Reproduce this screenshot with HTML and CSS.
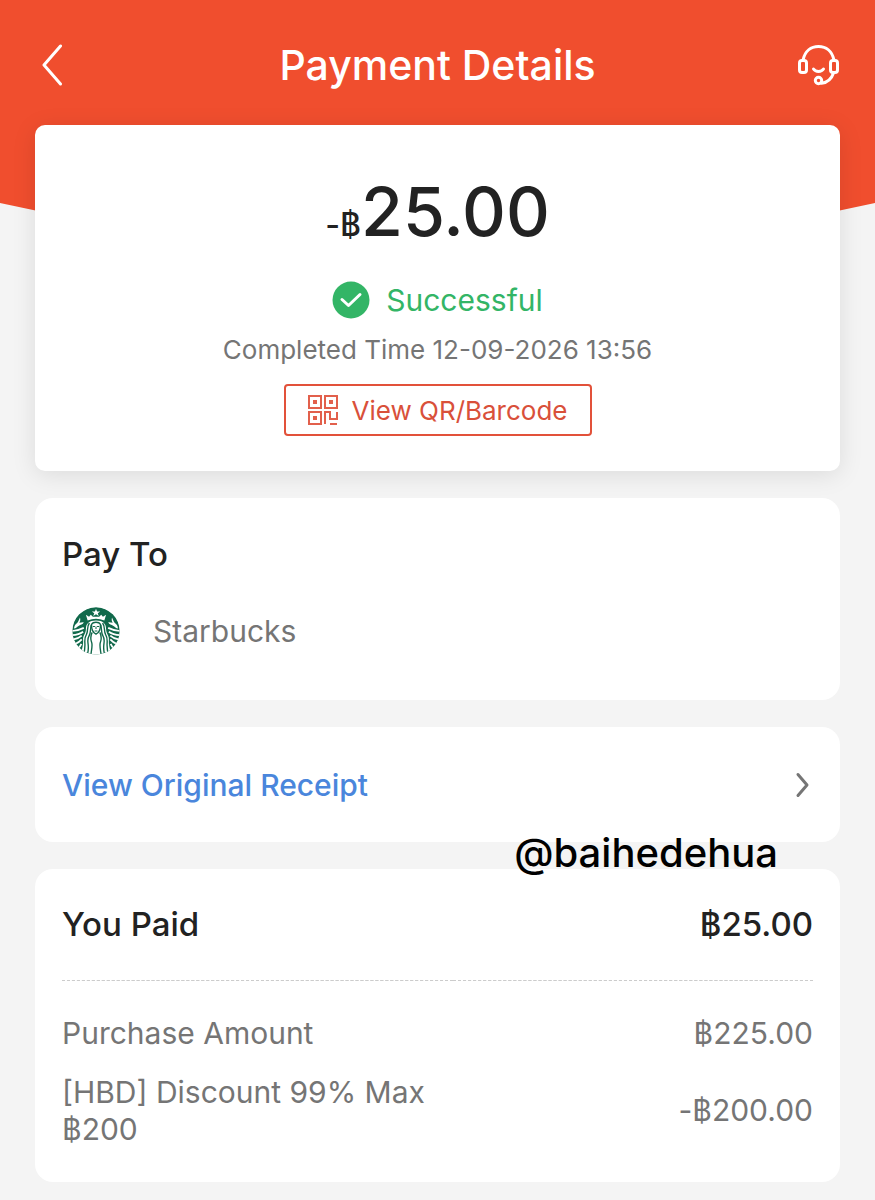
FILE: index.html
```html
<!DOCTYPE html>
<html lang="en">
<head>
    <meta charset="UTF-8">
    <meta name="viewport" content="width=device-width, initial-scale=1">
    <title>Payment Details</title>
    <link rel="stylesheet" href="styles.css">
</head>
<body>
    <header class="header">
        <button type="button" class="icon-button" aria-label="Back">
            <svg width="42" height="42" viewBox="0 0 42 42">
                <path d="M24.500 2 L8 21 L24.500 40" />
            </svg>
        </button>
        <h1>Payment Details</h1>
        <button type="button" class="icon-button" aria-label="Help">
            <svg width="42" height="42" viewBox="0 0 42 42">
                <path d="M6 16 C8 7 14 2.500 21.500 2.500 C29 2.500 35 7 37 16" />
                <rect x="2.500" y="16.500" width="7" height="12" rx="2.500" />
                <rect x="33.500" y="16.500" width="7" height="12" rx="2.500" />
                <path d="M16.500 25 C18.500 28.200 24.500 28.200 26.500 25" />
                <circle cx="21.500" cy="36.500" r="3.200" />
                <path d="M36.500 29 C34.500 35 31 38.500 24.500 39.300" />
            </svg>
        </button>
    </header>

    <main>
        <!-- summary -->
        <section class="card summary">
            <p class="amount"><span>-฿</span>25.00</p>
            <p class="status">
                <svg width="38" height="38" viewBox="0 0 38 38">
                    <circle cx="19" cy="19" r="18.500" />
                    <path d="M10 18.500 L16.500 24.500 L28 13.500" />
                </svg>
                Successful
            </p>
            <p class="time">Completed Time 12-09-2026 13:56</p>
            <button type="button" class="qr-button">
                <svg width="30" height="30" viewBox="0 0 30 30">
                    <path d="M1 1h12v12H1z M17 1h12v12H17z M1 17h12v12H1z" />
                    <path d="M17 29V17h5v7h7v-7 M22 29h7" />
                    <path class="dot" d="M5 5h4v4H5z M21 5h4v4h-4z M5 21h4v4H5z" />
                </svg>
                View QR/Barcode
            </button>
        </section>

        <!-- merchant -->
        <section class="card pay-to">
            <h2>Pay To</h2>
            <div class="merchant">
                <svg width="48" height="48" viewBox="0 0 138 138">
                    <defs>
                        <clipPath id="disc"><circle cx="69" cy="69" r="68" /></clipPath>
                    </defs>
                    <g clip-path="url(#disc)">
                        <circle cx="69" cy="69" r="69" fill="#11694b" />
                        <!-- crown -->
                        <path fill="#fff" d="M69 5l3 8 9 0-7 5 3 8-8-5-8 5 3-8-7-5 9 0z" />
                        <path fill="#fff" d="M40 22l9 6 5-6 6 6h18l6-6 5 6 9-6-5 17q-24-10-48 0z" />
                        <!-- head and hair -->
                        <path fill="#fff" d="M69 39c-20 0-29 9-29 24 0 15-10 19-8 32 1 13-3 25-7 43h88c-4-18-8-30-7-43 2-13-8-17-8-32 0-15-9-24-29-24z" />
                        <g fill="none" stroke="#11694b" stroke-width="4">
                            <path d="M50 46c-9 12-2 22-9 34-10 15 2 27-8 58" />
                            <path d="M55 52c-3 14 0 21-6 31-10 16 4 25-5 55" />
                            <path d="M88 46c9 12 2 22 9 34 10 15-2 27 8 58" />
                            <path d="M83 52c3 14 0 21 6 31 10 16-4 25 5 55" />
                            <path d="M58 73c-8 16-3 22-1 31 2 10-1 21-3 34" />
                            <path d="M80 73c8 16 3 22 1 31-2 10 1 21 3 34" />
                        </g>
                        <!-- face -->
                        <path fill="#fff" stroke="#11694b" stroke-width="4" d="M56 50c5-8 21-8 26 0 0 14-4 24-13 28-9-4-13-14-13-28z" />
                        <path fill="none" stroke="#11694b" stroke-width="3" d="M60 56h6 M72 56h6 M69 56v7 M65 69h8" />
                        <!-- tails -->
                        <g fill="#fff">
                            <path d="M23 30c2 8 0 12-2 15 5 0 9-2 13-1-3 7-10 7-14 10-5 3-9 8-14 8 0-6 3-11 8-15 4-4 5-9 9-17z" />
                            <path d="M115 30c-2 8 0 12 2 15-5 0-9-2-13-1 3 7 10 7 14 10 5 3 9 8 14 8 0-6-3-11-8-15-4-4-5-9-9-17z" />
                        </g>
                        <g fill="none" stroke="#fff" stroke-width="5">
                            <path d="M0 69q20-2 34-9 M0 81q20-1 32-10 M2 94q16-3 26-12 M8 107q12-5 20-14 M18 118q6-5 9-12" />
                            <path d="M138 69q-20-2-34-9 M138 81q-20-1-32-10 M136 94q-16-3-26-12 M130 107q-12-5-20-14 M120 118q-6-5-9-12" />
                        </g>
                    </g>
                </svg>
                <span>Starbucks</span>
            </div>
        </section>

        <section class="card receipt">
            <a href="#">
                View Original Receipt
                <svg width="20" height="26" viewBox="0 0 20 26">
                    <path d="M5 2.500 L14 13 L5 23.500" />
                </svg>
            </a>
            <span class="handle">@baihedehua</span>
        </section>

        <!-- breakdown -->
        <section class="card paid">
            <table>
                <thead>
                    <tr>
                        <th scope="row">You Paid</th>
                        <td>฿25.00</td>
                    </tr>
                </thead>
                <tbody>
                    <tr>
                        <th scope="row">Purchase Amount</th>
                        <td>฿225.00</td>
                    </tr>
                    <tr>
                        <th scope="row">[HBD] Discount 99% Max ฿200</th>
                        <td>-฿200.00</td>
                    </tr>
                </tbody>
            </table>
        </section>
    </main>
</body>
</html>
```
FILE: styles.css
```css
* {
    box-sizing: border-box;
}

body {
    position: relative;
    margin: 0;
    font-family: Inter, "Liberation Sans", sans-serif;
    background-color: #f4f4f4;
    color: #222;
}

/* orange backdrop with the bowed bottom edge */
body::before {
    content: "";
    position: absolute;
    z-index: -1;
    top: 0;
    left: 0;
    width: 100%;
    height: 240px;
    background-color: #f04e2e;
    clip-path: polygon(0 0, 100% 0, 100% 203px, 80% 240px, 20% 240px, 0 203px);
}

h1, h2, p {
    margin: 0;
    font-weight: 500;
}

button {
    font-family: inherit;
    background: none;
    border: none;
    padding: 0;
    cursor: pointer;
}

svg {
    display: block;
    flex-shrink: 0;
}

.header {
    display: flex;
    justify-content: space-between;
    align-items: center;
    height: 125px;
    padding: 5px 36px 0;
}

.header h1 {
    font-size: 41px;
    color: #fff;
    line-height: 48px;
}

.icon-button svg,
.receipt svg {
    fill: none;
    stroke: #fff;
    stroke-width: 3;
    stroke-linecap: round;
    stroke-linejoin: round;
}

main {
    display: flex;
    flex-direction: column;
    gap: 27px;
    padding: 0 35px 18px;
}

.card {
    background-color: #fff;
    border-radius: 18px;
    padding: 0 27px;
}

.summary {
    display: flex;
    flex-direction: column;
    align-items: center;
    padding-top: 46px;
    padding-bottom: 35px;
    border-radius: 10px;
    box-shadow: 0 4px 24px rgba(0, 0, 0, 0.1);
}

.amount {
    font-size: 68px;
    line-height: 80px;
}

.amount span {
    font-size: 32px;
}

.status {
    display: flex;
    align-items: center;
    gap: 16px;
    margin-top: 16px;
    font-size: 30px;
    font-weight: 400;
    line-height: 38px;
    color: #33b566;
}

.status circle {
    fill: #33b566;
}

.status path {
    fill: none;
    stroke: #fff;
    stroke-width: 3;
    stroke-linecap: round;
    stroke-linejoin: round;
}

.time {
    margin-top: 14px;
    font-size: 26px;
    font-weight: 400;
    line-height: 34px;
    color: #757575;
}

.qr-button {
    display: flex;
    align-items: center;
    gap: 14px;
    margin-top: 17px;
    height: 52px;
    padding: 0 22px;
    border: 2px solid #e2513a;
    border-radius: 4px;
    font-size: 26px;
    color: #d9503a;
}

.qr-button path {
    fill: none;
    stroke: #e2604c;
    stroke-width: 2;
}

.qr-button .dot {
    fill: #e2604c;
    stroke: none;
}

.pay-to {
    padding-top: 35px;
    padding-bottom: 45px;
}

.pay-to h2 {
    font-size: 33px;
    line-height: 42px;
}

.merchant {
    display: flex;
    align-items: center;
    gap: 33px;
    margin-top: 32px;
    padding-left: 10px;
    font-size: 30px;
    color: #757575;
}

.receipt {
    position: relative;
}

.receipt a {
    display: flex;
    justify-content: space-between;
    align-items: center;
    height: 115px;
    font-size: 30px;
    font-weight: 500;
    color: #4a86dc;
    text-decoration: none;
}

.receipt svg {
    stroke: #757575;
}

/* account handle laid over the gap between the two cards */
.handle {
    position: absolute;
    z-index: 1;
    right: 62px;
    bottom: -35px;
    font-size: 40px;
    font-weight: 500;
    line-height: 48px;
    color: #000;
}

.paid {
    padding-bottom: 31px;
}

table {
    width: 100%;
    border-collapse: collapse;
    font-size: 30px;
    line-height: 37px;
    color: #757575;
}

th {
    width: 52%;
    padding: 0;
    font-weight: 400;
    text-align: left;
}

td {
    padding: 0;
    text-align: right;
}

thead th,
thead td {
    height: 111px;
    font-size: 33px;
    font-weight: 500;
    color: #222;
    border-bottom: 1px dashed #ccc;
}

tbody tr:first-child > * {
    padding-top: 34px;
}

tbody th,
tbody td {
    padding-bottom: 22px;
}

tbody tr:last-child > * {
    padding-bottom: 3px;
}
```
